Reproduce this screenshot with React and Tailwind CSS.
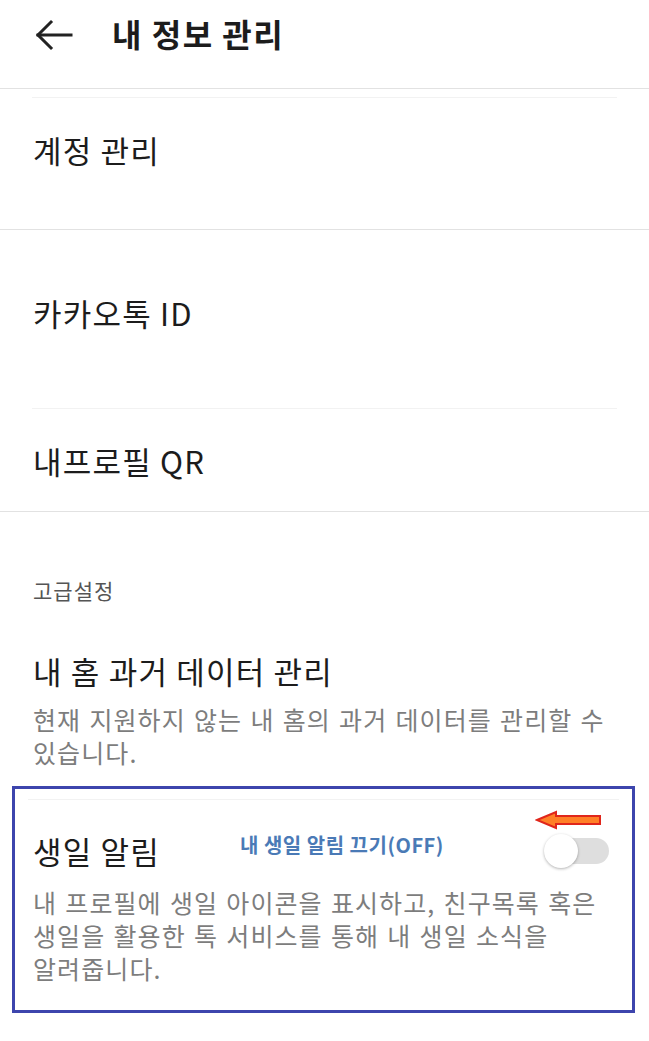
import React, { useState } from 'react';

const FONT = { fontFamily: '"Noto Sans CJK KR", "Noto Sans", sans-serif' };

const BackArrow = () => (
  <svg width="38" height="32" viewBox="0 0 38 32" fill="none" stroke="#222" strokeWidth="3" strokeLinecap="square">
    <path d="M3 16 H36" />
    <path d="M16 3 L3 16 L16 29" />
  </svg>
);

const Toggle = ({ on, onChange }) => (
  <button onClick={() => onChange(!on)} className="relative w-[65px] h-[36px] flex items-center">
    <span className="absolute left-[7px] right-0 h-[26px] rounded-full bg-[#dedede]" />
    <span className="absolute left-0 w-[34px] h-[34px] rounded-full bg-white shadow-[0_1px_3px_rgba(0,0,0,0.3)]" />
  </button>
);

export default function App() {
  const [birthday, setBirthday] = useState(false);

  return (
    <div className="w-[649px] h-[1041px] bg-white overflow-hidden text-[#1c1c1c]" style={FONT}>
      {/* Header */}
      <div className="h-[89px] flex items-start border-b border-[#e2e2e2]">
        <div className="ml-[35px] mt-[19px]"><BackArrow /></div>
        <h1 className="ml-[39px] mt-[13px] text-[32px] font-bold leading-[40px] tracking-[1.5px]">내 정보 관리</h1>
      </div>
      <div className="h-[8px]" />
      <div className="mx-[32px] h-px bg-[#f2f2f2]" />

      <div className="h-[132px] border-b border-[#e2e2e2] pt-[32px] px-[33px]">
        <div className="text-[31px] leading-[40px] tracking-[1.2px]">계정 관리</div>
      </div>

      <div className="h-[178px] pt-[63px] px-[33px]">
        <div className="text-[31px] leading-[40px] tracking-[1.2px]">카카오톡 ID</div>
      </div>
      <div className="mx-[32px] h-px bg-[#f2f2f2]" />

      <div className="h-[103px] border-b border-[#e2e2e2] pt-[32px] px-[33px]">
        <div className="text-[31px] leading-[40px] tracking-[1.2px]">내프로필 QR</div>
      </div>

      <div className="pt-[64px] pl-[33px] pr-[30px]">
        <div className="text-[21px] leading-[28px] tracking-[1px] text-[#555]">고급설정</div>
        <div className="mt-[47px] text-[31px] leading-[40px] tracking-[1.2px]">내 홈 과거 데이터 관리</div>
        <p className="mt-[12px] text-[25px] leading-[33px] tracking-[1.1px] [word-spacing:1.5px] text-[#7d7d7d] break-keep">
          현재 지원하지 않는 내 홈의 과거 데이터를 관리할 수 있습니다.
        </p>
      </div>

      {/* Highlighted birthday section */}
      <div className="relative mt-[17px] mx-[12px] w-[623px] h-[227px] border-[3px] border-[#3d45ad]">
        <div className="mt-[10px] mx-[13px] h-px bg-[#f2f2f2]" />
        <div className="mt-[31px] pl-[18px] pr-[23px] flex items-center justify-between">
          <div className="text-[31px] leading-[40px] tracking-[1.2px]">생일 알림</div>
          <Toggle on={birthday} onChange={setBirthday} />
        </div>
        <p className="mt-[15px] pl-[18px] pr-[12px] text-[25px] leading-[33px] tracking-[1.1px] [word-spacing:1.5px] text-[#7d7d7d] break-keep">
          내 프로필에 생일 아이콘을 표시하고, 친구목록 혹은 생일을 활용한 톡 서비스를 통해 내 생일 소식을 알려줍니다.
        </p>

        <div className="absolute left-[225px] top-[43px] text-[20px] leading-[26px] tracking-[0.5px] font-bold text-[#4a7ab6]">
          내 생일 알림 끄기(OFF)
        </div>
        <svg className="absolute left-[520px] top-[20px]" width="68" height="22" viewBox="0 0 68 22">
          <polygon points="2,11 21,3 21,7 65,7 65,15 21,15 21,19" fill="#ff7f27" stroke="#e0261b" strokeWidth="2" strokeLinejoin="miter" />
        </svg>
      </div>
    </div>
  );
}
